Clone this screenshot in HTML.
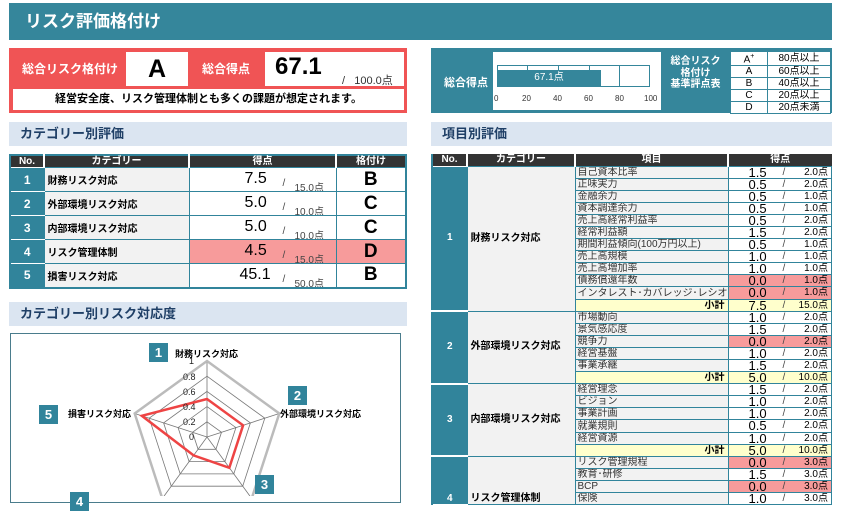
<!DOCTYPE html>
<html><head><meta charset="utf-8"><style>
*{box-sizing:border-box;margin:0;padding:0}
body{width:847px;height:496px;overflow:hidden;background:#fff;font-family:"Liberation Sans","Noto Sans CJK JP",sans-serif;position:relative;color:#000}
.a{position:absolute}
.title{left:9px;top:3px;width:823px;height:37px;background:#35869b;color:#fff;font-weight:bold;font-size:17px;line-height:37px;padding-left:16px}
.sec{background:#dbe5f1;color:#1f3f66;font-weight:bold;font-size:13px;line-height:24px;padding-left:11px;height:24px}
table{border-collapse:collapse;table-layout:fixed;position:absolute}
td{border:1px solid #31849b;padding:0;overflow:hidden;white-space:nowrap}
th{background:#333;color:#fff;font-size:10px;font-weight:bold;height:12px;line-height:11px;border-left:2px solid #fff;padding:0}
th:first-child{border-left:none}
.no{background:#31849b;color:#fff;font-weight:bold;text-align:center;font-size:12px;border-color:#fff #31849b}
.cat{background:#f2f2f2;font-weight:bold;font-size:10px;padding-left:3px}
.pk{background:#f79b9b}
.yl{background:#ffffcc}
#rt td{height:12.1px;font-size:10px;line-height:10px;vertical-align:bottom}
#rt td.no,#rt td.cat{vertical-align:middle}
#rt .it{background:#f2f2f2;padding-left:2px;color:#333}
.sc{position:relative}
.sc b{font-weight:normal;position:absolute;left:20px;top:-1px;font-size:13px;line-height:13px}
.sc i{font-style:normal;position:absolute;left:54px;top:1px;font-size:10px;color:#444}
.sc u{text-decoration:none;position:absolute;right:3px;top:1px;font-size:10px}
.lt .sc b{left:55px;font-size:16px;top:3px;line-height:16px}
.badge{position:absolute;width:19px;height:19px;background:#31849b;color:#fff;font-weight:bold;font-size:13px;text-align:center;line-height:19px}
.lbl{position:absolute;font-size:9px;font-weight:bold}
.gr{text-align:center;font-size:19px;font-weight:bold}
</style></head><body>
<div class="a title">リスク評価格付け</div>

<div class="a" style="left:9px;top:48px;width:398px;height:65px;background:#f05455"></div>
<div class="a" style="left:22px;top:60px;color:#fff;font-weight:bold;font-size:12px">総合リスク格付け</div>
<div class="a" style="left:126px;top:52px;width:62px;height:34px;background:#fff;text-align:center;font-size:25px;font-weight:bold;line-height:34px">A</div>
<div class="a" style="left:202px;top:60px;color:#fff;font-weight:bold;font-size:12px">総合得点</div>
<div class="a" style="left:265px;top:52px;width:139px;height:34px;background:#fff"></div>
<div class="a" style="left:275px;top:53px;font-size:24px;font-weight:bold">67.1</div>
<div class="a" style="left:342px;top:72px;font-size:11px;color:#333">/&nbsp;&nbsp;&nbsp;100.0点</div>
<div class="a" style="left:13px;top:89px;width:391px;height:21px;background:#fff;text-align:center;font-size:11px;font-weight:bold;line-height:21px">経営安全度、リスク管理体制とも多くの課題が想定されます。</div>

<div class="a" style="left:431px;top:48px;width:401px;height:65px;background:#35869b"></div>
<div class="a" style="left:444px;top:74px;color:#fff;font-weight:bold;font-size:11px">総合得点</div>
<div class="a" style="left:493px;top:52px;width:168px;height:58px;background:#fff"></div>
<div class="a" style="left:497px;top:65px;width:153px;height:22px;border:1px solid #35869b"></div>
<div class="a" style="left:527px;top:65px;width:1px;height:22px;background:#35869b"></div>
<div class="a" style="left:558px;top:65px;width:1px;height:22px;background:#35869b"></div>
<div class="a" style="left:589px;top:65px;width:1px;height:22px;background:#35869b"></div>
<div class="a" style="left:619px;top:65px;width:1px;height:22px;background:#35869b"></div>
<div class="a" style="left:497px;top:70px;width:104px;height:16px;background:#35869b;color:#fff;font-size:10px;text-align:center;line-height:16px">67.1点</div>
<div class="a" style="left:494px;top:94px;width:170px;font-size:8px;color:#333;word-spacing:0">
<span class="a" style="left:0">0</span><span class="a" style="left:28px">20</span><span class="a" style="left:59px">40</span><span class="a" style="left:90px">60</span><span class="a" style="left:121px">80</span><span class="a" style="left:150px">100</span></div>
<div class="a" style="left:668px;top:56px;width:55px;color:#fff;font-weight:bold;font-size:10px;line-height:11.5px;text-align:center">総合リスク<br>格付け<br>基準評点表</div>
<table style="left:730px;top:51px;width:101px;font-size:10px;text-align:center">
<tr><td style="background:#fff;width:37px;height:12px;line-height:10px;border-color:#35869b">A<sup style="font-size:7px">+</sup></td><td style="background:#fff;line-height:10px;border-color:#35869b">80点以上</td></tr>
<tr><td style="background:#fff;height:12px;line-height:10px;border-color:#35869b">A</td><td style="background:#fff;line-height:10px;border-color:#35869b">60点以上</td></tr>
<tr><td style="background:#fff;height:12px;line-height:10px;border-color:#35869b">B</td><td style="background:#fff;line-height:10px;border-color:#35869b">40点以上</td></tr>
<tr><td style="background:#fff;height:12px;line-height:10px;border-color:#35869b">C</td><td style="background:#fff;line-height:10px;border-color:#35869b">20点以上</td></tr>
<tr><td style="background:#fff;height:12px;line-height:10px;border-color:#35869b">D</td><td style="background:#fff;line-height:10px;border-color:#35869b">20点未満</td></tr>
</table>

<div class="a sec" style="left:9px;top:122px;width:398px">カテゴリー別評価</div>
<div class="a sec" style="left:431px;top:122px;width:401px">項目別評価</div>

<table class="lt" style="left:9px;top:154px;width:398px;border:2px solid #31849b">
<tr><th style="width:34px">No.</th><th style="width:145px">カテゴリー</th><th style="width:147px">得点</th><th>格付け</th></tr>
<tr style="height:24px"><td class="no">1</td><td class="cat">財務リスク対応</td><td class="sc"><b>7.5</b><i style="left:93px;top:10px">/</i><i style="left:105px;top:11px">15.0点</i></td><td class="gr">B</td></tr>
<tr style="height:24px"><td class="no">2</td><td class="cat">外部環境リスク対応</td><td class="sc"><b>5.0</b><i style="left:93px;top:10px">/</i><i style="left:105px;top:11px">10.0点</i></td><td class="gr">C</td></tr>
<tr style="height:24px"><td class="no">3</td><td class="cat">内部環境リスク対応</td><td class="sc"><b>5.0</b><i style="left:93px;top:10px">/</i><i style="left:105px;top:11px">10.0点</i></td><td class="gr">C</td></tr>
<tr style="height:24px"><td class="no">4</td><td class="cat">リスク管理体制</td><td class="sc pk"><b>4.5</b><i style="left:93px;top:10px">/</i><i style="left:105px;top:11px">15.0点</i></td><td class="pk gr">D</td></tr>
<tr style="height:24px"><td class="no">5</td><td class="cat">損害リスク対応</td><td class="sc"><b style="left:50px">45.1</b><i style="left:93px;top:10px">/</i><i style="left:105px;top:11px">50.0点</i></td><td class="gr">B</td></tr>
</table>

<div class="a sec" style="left:9px;top:302px;width:398px">カテゴリー別リスク対応度</div>
<div class="a" style="left:10px;top:333px;width:391px;height:170px;border:1px solid #4a7c8c"></div>
<svg class="a" style="left:0;top:0" width="847" height="496">
<g fill="none" stroke="#777" stroke-width="0.8">
<polygon points="207,421.8 221.5,432.3 215.9,449.3 198.1,449.3 192.5,432.3"/>
<polygon points="207,406.6 235.9,427.6 224.9,461.6 189.1,461.6 178.1,427.6"/>
<polygon points="207,391.4 250.4,422.9 233.8,473.9 180.2,473.9 163.6,422.9"/>
<polygon points="207,376.2 264.8,418.2 242.7,486.2 171.3,486.2 149.2,418.2"/>
<line x1="207" y1="437" x2="207" y2="361"/><line x1="207" y1="437" x2="279.3" y2="413.5"/><line x1="207" y1="437" x2="251.7" y2="498.5"/><line x1="207" y1="437" x2="162.3" y2="498.5"/><line x1="207" y1="437" x2="134.7" y2="413.5"/>
</g>
<polygon points="207,361 279.3,413.5 251.7,498.5 162.3,498.5 134.7,413.5" fill="none" stroke="#bbb" stroke-width="2.5"/>
<polygon points="207,399 243.1,425.3 229.3,467.8 193.6,455.4 141.8,415.8" fill="none" stroke="#ee4444" stroke-width="2.5"/>
<g font-size="9" fill="#222" font-family="Liberation Sans,sans-serif"><text x="189" y="364">1</text><text x="183" y="380">0.8</text><text x="183" y="395">0.6</text><text x="183" y="410">0.4</text><text x="183" y="425">0.2</text><text x="189" y="440">0</text></g>
</svg>
<div class="badge" style="left:149px;top:343px">1</div><div class="lbl" style="left:175px;top:347px">財務リスク対応</div>
<div class="badge" style="left:288px;top:386px">2</div><div class="lbl" style="left:280px;top:407px">外部環境リスク対応</div>
<div class="badge" style="left:39px;top:405px">5</div><div class="lbl" style="left:68px;top:407px">損害リスク対応</div>
<div class="badge" style="left:255px;top:475px">3</div>
<div class="badge" style="left:70px;top:492px">4</div>

<table id="rt" style="left:431px;top:154px;width:401px;border-left:2px solid #31849b">
<tr><th style="width:35px">No.</th><th style="width:108px">カテゴリー</th><th style="width:153px">項目</th><th>得点</th></tr>
<tr><td class="no" rowspan="12" style="border-bottom:2px solid #fff">1</td><td class="cat" rowspan="12">財務リスク対応</td><td class="it">自己資本比率</td><td class="sc"><b>1.5</b><i>/</i><u>2.0点</u></td></tr>
<tr><td class="it">正味実力</td><td class="sc"><b>0.5</b><i>/</i><u>2.0点</u></td></tr>
<tr><td class="it">金融余力</td><td class="sc"><b>0.5</b><i>/</i><u>1.0点</u></td></tr>
<tr><td class="it">資本調達余力</td><td class="sc"><b>0.5</b><i>/</i><u>1.0点</u></td></tr>
<tr><td class="it">売上高経常利益率</td><td class="sc"><b>0.5</b><i>/</i><u>2.0点</u></td></tr>
<tr><td class="it">経常利益額</td><td class="sc"><b>1.5</b><i>/</i><u>2.0点</u></td></tr>
<tr><td class="it">期間利益傾向(100万円以上)</td><td class="sc"><b>0.5</b><i>/</i><u>1.0点</u></td></tr>
<tr><td class="it">売上高規模</td><td class="sc"><b>1.0</b><i>/</i><u>1.0点</u></td></tr>
<tr><td class="it">売上高増加率</td><td class="sc"><b>1.0</b><i>/</i><u>1.0点</u></td></tr>
<tr><td class="it">債務償還年数</td><td class="sc pk"><b>0.0</b><i>/</i><u>1.0点</u></td></tr>
<tr><td class="it">インタレスト･カバレッジ･レシオ</td><td class="sc pk"><b>0.0</b><i>/</i><u>1.0点</u></td></tr>
<tr><td class="yl" style="text-align:right;font-weight:bold;padding-right:3px">小計</td><td class="sc yl"><b>7.5</b><i>/</i><u>15.0点</u></td></tr>
<tr><td class="no" rowspan="6" style="border-bottom:2px solid #fff">2</td><td class="cat" rowspan="6">外部環境リスク対応</td><td class="it">市場動向</td><td class="sc"><b>1.0</b><i>/</i><u>2.0点</u></td></tr>
<tr><td class="it">景気感応度</td><td class="sc"><b>1.5</b><i>/</i><u>2.0点</u></td></tr>
<tr><td class="it">競争力</td><td class="sc pk"><b>0.0</b><i>/</i><u>2.0点</u></td></tr>
<tr><td class="it">経営基盤</td><td class="sc"><b>1.0</b><i>/</i><u>2.0点</u></td></tr>
<tr><td class="it">事業承継</td><td class="sc"><b>1.5</b><i>/</i><u>2.0点</u></td></tr>
<tr><td class="yl" style="text-align:right;font-weight:bold;padding-right:3px">小計</td><td class="sc yl"><b>5.0</b><i>/</i><u>10.0点</u></td></tr>
<tr><td class="no" rowspan="6" style="border-bottom:2px solid #fff">3</td><td class="cat" rowspan="6">内部環境リスク対応</td><td class="it">経営理念</td><td class="sc"><b>1.5</b><i>/</i><u>2.0点</u></td></tr>
<tr><td class="it">ビジョン</td><td class="sc"><b>1.0</b><i>/</i><u>2.0点</u></td></tr>
<tr><td class="it">事業計画</td><td class="sc"><b>1.0</b><i>/</i><u>2.0点</u></td></tr>
<tr><td class="it">就業規則</td><td class="sc"><b>0.5</b><i>/</i><u>2.0点</u></td></tr>
<tr><td class="it">経営資源</td><td class="sc"><b>1.0</b><i>/</i><u>2.0点</u></td></tr>
<tr><td class="yl" style="text-align:right;font-weight:bold;padding-right:3px">小計</td><td class="sc yl"><b>5.0</b><i>/</i><u>10.0点</u></td></tr>
<tr><td class="no" rowspan="4" style="vertical-align:bottom">4</td><td class="cat" rowspan="4" style="vertical-align:bottom">リスク管理体制</td><td class="it">リスク管理規程</td><td class="sc pk"><b>0.0</b><i>/</i><u>3.0点</u></td></tr>
<tr><td class="it">教育･研修</td><td class="sc"><b>1.5</b><i>/</i><u>3.0点</u></td></tr>
<tr><td class="it">BCP</td><td class="sc pk"><b>0.0</b><i>/</i><u>3.0点</u></td></tr>
<tr><td class="it">保険</td><td class="sc"><b>1.0</b><i>/</i><u>3.0点</u></td></tr>
</table>
</body></html>
